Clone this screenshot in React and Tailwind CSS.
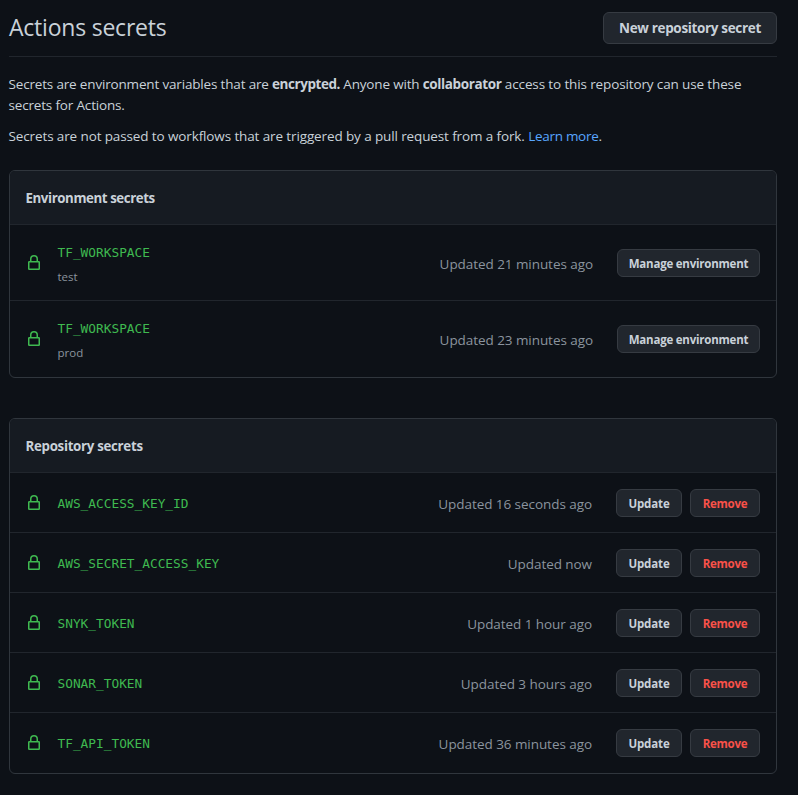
import React from "react";

const environmentSecrets = [
  { name: "TF_WORKSPACE", environment: "test", updated: "Updated 21 minutes ago" },
  { name: "TF_WORKSPACE", environment: "prod", updated: "Updated 23 minutes ago" },
];

const repositorySecrets = [
  { name: "AWS_ACCESS_KEY_ID", updated: "Updated 16 seconds ago" },
  { name: "AWS_SECRET_ACCESS_KEY", updated: "Updated now" },
  { name: "SNYK_TOKEN", updated: "Updated 1 hour ago" },
  { name: "SONAR_TOKEN", updated: "Updated 3 hours ago" },
  { name: "TF_API_TOKEN", updated: "Updated 36 minutes ago" },
];

function LockIcon() {
  return (
    <svg className="block h-4 w-4 shrink-0 text-[#3fb950]" viewBox="0 0 16 16" fill="none" stroke="currentColor" strokeWidth="1.5">
      <rect x="2.75" y="6.75" width="10.5" height="7.5" rx="0.5" />
      <path d="M4.75 6.75V4a3.25 3.25 0 0 1 6.5 0v2.75" />
    </svg>
  );
}

function SmallButton({ danger, className, children }) {
  return (
    <button
      className={`h-7 rounded-md border border-[#363b42] bg-[#21262d] pt-px text-[11.5px] leading-[25px] font-[660] whitespace-nowrap ${
        danger ? "text-[#f85149]" : "text-[#c9d1d9]"
      } ${className}`}
    >
      {children}
    </button>
  );
}

function SecretName({ children }) {
  return <code className="block font-['DejaVu_Sans_Mono',monospace] text-[12.8px] leading-5 text-[#3fb950]">{children}</code>;
}

function Updated({ children }) {
  return <span className="mr-6 ml-auto pt-0.5 leading-5 tracking-[-0.06px] whitespace-nowrap text-[#8b949e]">{children}</span>;
}

function Panel({ title, titleClass, children }) {
  return (
    <section className="overflow-hidden rounded-md border border-[#30363d]">
      <h3 className={`h-[53px] bg-[#161b22] px-[15.5px] pt-[17px] text-[13.3px] leading-5 font-[660] ${titleClass}`}>{title}</h3>
      {children}
    </section>
  );
}

export default function App() {
  return (
    <main className="h-[795px] overflow-hidden bg-[#0d1117] pt-3 pr-[21px] pl-[9px] font-['Open_Sans',sans-serif] text-[13.5px] text-[#c9d1d9]">
      <header className="flex h-[45px] items-start justify-between border-b border-[#21262d]">
        <h2 className="-mt-px text-[23px] leading-8 tracking-[-0.22px]">Actions secrets</h2>
        <button className="h-8 w-[174px] rounded-md border border-[#363b42] bg-[#21262d] leading-[30px] font-[660] tracking-[-0.34px]">
          New repository secret
        </button>
      </header>
      <p className="mt-[17px] -ml-[0.5px] leading-[21px] tracking-[-0.17px]">
        Secrets are environment variables that are <strong className="font-[660] tracking-[-0.45px]">encrypted.</strong> Anyone with{" "}
        <strong className="font-[660] tracking-[-0.38px]">collaborator</strong>
        <span className="tracking-[-0.13px]"> access to this repository can use these</span>
        <br />
        secrets for Actions.
      </p>
      <p className="mt-2.5 mb-[23px] -ml-[0.5px] leading-[21px] tracking-[-0.12px]">
        Secrets are not passed to workflows that are triggered by a pull request from a fork.{" "}
        <a className="tracking-[-0.28px] text-[#58a6ff]">Learn more</a>.
      </p>

      <Panel title="Environment secrets" titleClass="tracking-[-0.42px]">
        {environmentSecrets.map((s) => (
          <div key={s.environment} className="flex h-[76px] items-center border-t border-[#21262d] px-4 last:h-[77px] last:pb-px">
            <LockIcon />
            <div className="ml-[15.5px] pt-[5px]">
              <SecretName>{s.name}</SecretName>
              <span className="mt-1 block text-[11.5px] leading-5 text-[#8b949e]">{s.environment}</span>
            </div>
            <Updated>{s.updated}</Updated>
            <SmallButton className="w-[143px] tracking-[-0.22px]">Manage environment</SmallButton>
          </div>
        ))}
      </Panel>

      <div className="mt-10">
        <Panel title="Repository secrets" titleClass="tracking-[-0.3px]">
          {repositorySecrets.map((s) => (
            <div key={s.name} className="flex h-[60px] items-center border-t border-[#21262d] px-4 last:h-[61px] last:pb-px">
              <LockIcon />
              <div className="ml-[15.5px] pt-0.5">
                <SecretName>{s.name}</SecretName>
              </div>
              <Updated>{s.updated}</Updated>
              <div className="flex gap-2">
                <SmallButton className="w-[66px] tracking-[-0.15px]">Update</SmallButton>
                <SmallButton danger className="w-[70px] tracking-[-0.25px]">
                  Remove
                </SmallButton>
              </div>
            </div>
          ))}
        </Panel>
      </div>
    </main>
  );
}
